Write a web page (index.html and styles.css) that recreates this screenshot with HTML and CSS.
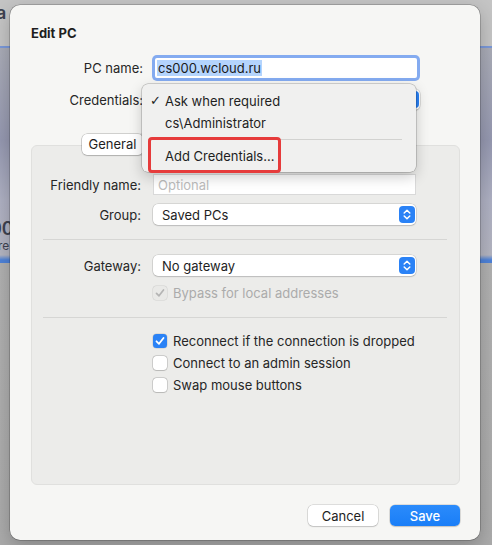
FILE: index.html
```html
<!DOCTYPE html>
<html>
<head>
<meta charset="utf-8">
<link rel="stylesheet" href="styles.css">
</head>
<body>
<div class="backdrop">
  <span class="bg-a">a</span>
  <span class="bg-00">00</span>
  <span class="bg-re">re</span>
</div>
<div class="sheet">
  <h1 class="title">Edit PC</h1>
  <div class="top-form">
    <label class="lbl">PC name:</label>
    <div class="field focused"><span class="sel">cs000.wcloud.ru</span></div>
    <label class="lbl">Credentials:</label>
    <div class="popup"><span></span>
      <svg class="stepper" width="16" height="17" viewBox="0 0 16 17"><rect width="16" height="17" rx="4" fill="#2a82f6"/><path d="M5.2 7 L8 4.3 L10.8 7 M5.2 10 L8 12.7 L10.8 10" fill="none" stroke="#fff" stroke-width="1.5" stroke-linecap="round" stroke-linejoin="round"/></svg>
    </div>
  </div>

  <div class="tabs">
    <div class="seg">
      <span class="seg-item active">General</span>
      <span class="seg-rest"></span>
    </div>
  </div>

  <div class="group">
    <div class="grow">
      <label class="lbl2">Friendly name:</label>
      <div class="field"><span class="ph">Optional</span></div>
    </div>
    <div class="grow">
      <label class="lbl2">Group:</label>
      <div class="popup"><span>Saved PCs</span>
        <svg class="stepper" width="16" height="17" viewBox="0 0 16 17"><rect width="16" height="17" rx="4" fill="#2a82f6"/><path d="M5.2 7 L8 4.3 L10.8 7 M5.2 10 L8 12.7 L10.8 10" fill="none" stroke="#fff" stroke-width="1.5" stroke-linecap="round" stroke-linejoin="round"/></svg>
      </div>
    </div>
    <div class="sep sep1"></div>
    <div class="grow">
      <label class="lbl2">Gateway:</label>
      <div class="popup"><span>No gateway</span>
        <svg class="stepper" width="16" height="17" viewBox="0 0 16 17"><rect width="16" height="17" rx="4" fill="#2a82f6"/><path d="M5.2 7 L8 4.3 L10.8 7 M5.2 10 L8 12.7 L10.8 10" fill="none" stroke="#fff" stroke-width="1.5" stroke-linecap="round" stroke-linejoin="round"/></svg>
      </div>
    </div>
    <div class="check disabled bypass">
      <span class="box on"><svg width="14" height="14" viewBox="0 0 14 14"><path d="M3.5 7.3 L6 9.8 L10.5 4" fill="none" stroke="#b4b4b4" stroke-width="1.7" stroke-linecap="round" stroke-linejoin="round"/></svg></span>
      <span>Bypass for local addresses</span>
    </div>
    <div class="sep sep2"></div>
    <div class="checks">
      <div class="check">
        <span class="box checked"><svg width="14" height="14" viewBox="0 0 14 14"><path d="M3.5 7.3 L6 9.8 L10.5 4" fill="none" stroke="#fff" stroke-width="1.8" stroke-linecap="round" stroke-linejoin="round"/></svg></span>
        <span>Reconnect if the connection is dropped</span>
      </div>
      <div class="check">
        <span class="box"></span>
        <span>Connect to an admin session</span>
      </div>
      <div class="check">
        <span class="box"></span>
        <span>Swap mouse buttons</span>
      </div>
    </div>
  </div>

  <div class="buttons">
    <button class="btn">Cancel</button>
    <button class="btn primary">Save</button>
  </div>

  <div class="menu">
    <div class="item"><span class="tick">✓</span>Ask when required</div>
    <div class="item">cs\Administrator</div>
    <div class="msep"></div>
    <div class="item">Add Credentials...</div>
    <div class="annot"></div>
  </div>
</div>
</body>
</html>
```
FILE: styles.css
```css
* { box-sizing: border-box; }
html, body { margin: 0; padding: 0; }
body {
  width: 492px;
  height: 545px;
  overflow: hidden;
  position: relative;
  background: #b8b8b8;
  font-family: "Inter", "Liberation Sans", sans-serif;
  font-size: 13px;
  color: #262626;
  padding: 5px 0 0 10px;
}

/* window behind the sheet */
.backdrop {
  position: absolute;
  left: 0; top: 0;
  width: 492px; height: 545px;
  background:
    linear-gradient(to bottom,
      #c4c4c4 0, #c4c4c4 46px,
      #7a98d8 46px, #7a98d8 48px,
      #a9abb6 48px, #9598b0 140px,
      #aeb0c2 200px, #b3b4c0 255px,
      #4e82d8 260px, #4e82d8 263px,
      #b0b0b0 263px, #aaaaaa 100%);
}
.backdrop span { position: absolute; color: #3e4250; }
.bg-a { left: -4px; top: 2px; font-size: 18px; font-weight: 600; color: #505050; }
.bg-00 { left: -10px; top: 218px; font-size: 18px; font-weight: 600; color: #4a4d5c; }
.bg-re { left: -2px; top: 238px; font-size: 12px; color: #6a6d7a; }

.sheet {
  position: relative;
  width: 470px;
  height: 535px;
  background: #f6f6f4;
  border-radius: 10px;
  box-shadow: 0 0 0 0.5px rgba(0,0,0,0.35), 0 6px 18px rgba(0,0,0,0.22);
  padding: 20px 20px 0 21px;
}

.title {
  margin: 0;
  font-size: 13px;
  font-weight: 700;
  line-height: 16px;
  color: #1e1e1e;
}

.top-form {
  display: grid;
  grid-template-columns: 112px 268px;
  grid-template-rows: 20px 21px;
  column-gap: 9px;
  row-gap: 11px;
  align-items: center;
  margin-top: 17px;
}
.lbl { text-align: right; line-height: 16px; }

.field {
  height: 21px;
  background: #fff;
  border: 1px solid #d9d9d9;
  display: flex;
  align-items: center;
  padding-left: 4px;
}
.field.focused {
  height: 20px;
  margin: 0 3px;
  border: none;
  border-radius: 2px;
  box-shadow: 0 0 0 3px #84abf0;
  padding-left: 2px;
}
.sel { background: #b4d4fd; line-height: 16px; padding: 0 1px; color: #1a1a1a; }
.ph { color: #bcbcbc; }

.popup {
  height: 21px;
  background: #fff;
  border-radius: 5px;
  box-shadow: 0 0 0 0.5px rgba(0,0,0,0.18), 0 1px 1.5px rgba(0,0,0,0.12);
  display: flex;
  align-items: center;
  justify-content: space-between;
  padding: 0 1px 0 9px;
  color: #1e1e1e;
}
.stepper { display: block; }

.tabs {
  position: relative;
  z-index: 1;
  margin-top: 24px;
  padding-left: 51px;
  height: 21px;
  display: flex;
}
.seg {
  display: flex;
  background: #e4e4e2;
  border-radius: 6px;
  box-shadow: 0 0 0 0.5px rgba(0,0,0,0.12);
}
.seg-item {
  height: 21px;
  line-height: 21px;
  color: #1e1e1e;
}
.seg-rest { width: 260px; height: 21px; }
.seg-item.active {
  width: 61px;
  text-align: center;
  background: #fff;
  border-radius: 5px;
  box-shadow: 0 0 0 0.5px rgba(0,0,0,0.2), 0 1px 1.5px rgba(0,0,0,0.12);
}

.group {
  margin-top: -10px;
  width: 429px;
  height: 340px;
  background: #ececea;
  border: 1px solid #e0e0de;
  border-radius: 6px;
  padding-top: 28px;
}
.grow {
  display: grid;
  grid-template-columns: 109px 263px;
  column-gap: 12px;
  align-items: center;
  height: 21px;
  margin-bottom: 9px;
}
.lbl2 { text-align: right; line-height: 16px; }
.sep {
  height: 1px;
  background: #d6d6d4;
  margin: 0 12px 0 11px;
}
.sep1 { margin-top: 14px; margin-bottom: 15px; }
.check {
  display: flex;
  align-items: center;
  gap: 6px;
  height: 16px;
  padding-left: 121px;
  line-height: 16px;
}
.bypass { margin-top: 9px; margin-bottom: 16px; }
.disabled { color: #ababab; }
.box {
  width: 14px;
  height: 14px;
  border-radius: 3.5px;
  background: #fff;
  box-shadow: 0 0 0 0.5px rgba(0,0,0,0.25), 0 0.5px 1px rgba(0,0,0,0.1);
  display: block;
}
.box svg { display: block; }
.box.on { background: #e9e9e7; box-shadow: 0 0 0 0.5px rgba(0,0,0,0.12); }
.box.checked { background: #2a82f6; box-shadow: 0 0 0 0.5px rgba(0,0,0,0.15); }
.checks {
  display: flex;
  flex-direction: column;
  gap: 6px;
  margin-top: 15px;
}

.buttons {
  display: flex;
  justify-content: flex-end;
  gap: 12px;
  margin-top: 20px;
}
.btn {
  width: 70px;
  height: 21px;
  font: inherit;
  font-size: 13px;
  color: #1e1e1e;
  background: #fff;
  border: none;
  border-radius: 5px;
  box-shadow: 0 0 0 0.5px rgba(0,0,0,0.2), 0 1px 1.5px rgba(0,0,0,0.12);
  padding: 0;
}
.btn.primary {
  background: linear-gradient(#2b8bfb, #1a7ef7);
  color: #fff;
  font-weight: 500;
}

/* dropdown menu overlaying the sheet */
.menu {
  position: absolute;
  left: 132px;
  top: 79px;
  width: 274px;
  height: 88px;
  z-index: 5;
  background: #f0f0ef;
  border-radius: 6px;
  box-shadow: 0 0 0 0.5px rgba(0,0,0,0.3), 0 5px 14px rgba(0,0,0,0.2);
  padding-top: 6px;
}
.item {
  height: 22px;
  line-height: 22px;
  padding-left: 23px;
  position: relative;
  color: #1e1e1e;
}
.tick {
  position: absolute;
  left: 8px;
  top: 0;
  font-family: "DejaVu Sans", sans-serif;
  font-size: 13px;
}
.msep {
  height: 1px;
  background: #d2d2d0;
  margin: 5px 14px 5px 6px;
}
.annot {
  position: absolute;
  left: 6px;
  top: 53px;
  width: 133px;
  height: 36px;
  border: 3px solid #e63b3b;
  border-radius: 4px;
}
```
